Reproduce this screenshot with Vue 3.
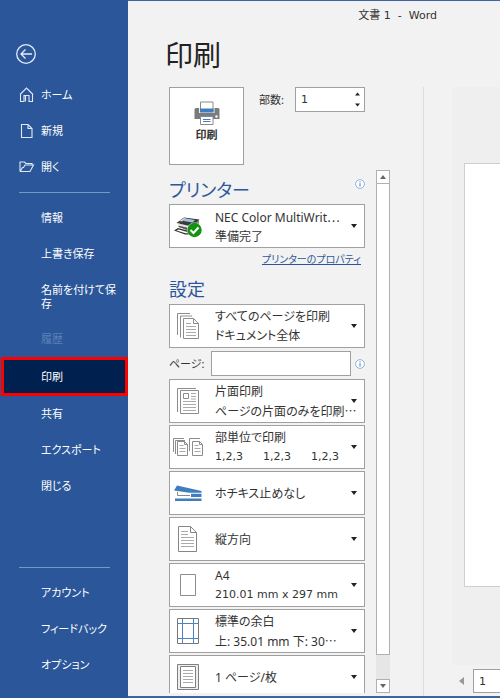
<script setup>
import { ref } from 'vue'

const primary = [
  { label: 'ホーム', icon: 'home' },
  { label: '新規', icon: 'new' },
  { label: '開く', icon: 'open' }
]
const fileItems = [
  { label: '情報' },
  { label: '上書き保存' },
  { label: '名前を付けて保存', tall: true },
  { label: '履歴', disabled: true },
  { label: '印刷', current: true },
  { label: '共有' },
  { label: 'エクスポート' },
  { label: '閉じる' }
]
const footerItems = ['アカウント', 'フィードバック', 'オプション']

const settings = [
  { icon: 'sides', lines: ['片面印刷', 'ページの片面のみを印刷'], cut: true },
  { icon: 'collate', lines: ['部単位で印刷', '1,2,3\u2003 \u20021,2,3\u2003 \u20021,2,3'], numeric: true },
  { icon: 'staple', lines: ['ホチキス止めなし'] },
  { icon: 'portrait', lines: ['縦方向'] },
  { icon: 'paper', lines: ['A4', '210.01 mm x 297 mm'], numeric: true },
  { icon: 'margins', lines: ['標準の余白', '上: 35.01 mm 下: 30'], cut: true },
  { icon: 'sheet', lines: ['1 ページ/枚'] }
]

const copies = ref('1')
const pages = ref('')
const currentPage = ref('1')
const step = (n) => {
  copies.value = String(Math.max(1, Number(copies.value) + n))
}
</script>

<template>
  <div class="backstage">
    <nav class="sidebar" aria-label="ファイル">
      <button class="back" type="button" aria-label="戻る">
        <svg width="22" height="22" viewBox="0 0 22 22" fill="none" stroke="#e6edf7" stroke-width="1.3">
          <circle cx="11" cy="11" r="9.3" />
          <path d="M17 11H6M10.500 6.500 6 11l4.500 4.500" />
        </svg>
      </button>

      <a v-for="item in primary" :key="item.label" class="item with-icon" href="#">
        <svg class="nav-icon" width="16" height="16" viewBox="0 0 16 16" fill="none" stroke="#e0e9f5" stroke-width="1.100">
          <path v-if="item.icon === 'home'" d="M1 7.500 7.500 1l6.500 6.500M1.500 7v7.500H5V8.500h5v6h3.500V7M6.500 14.500V9" />
          <path v-else-if="item.icon === 'new'" d="M2.500 1.500h6.500l4 4v9H2.500zM9 1.500v4h4" />
          <path v-else d="M1 12.500V3h4.500l1.500 1.500h6V6M1 12.500h10L14.500 6H6L4.500 8.500H3.500L1.200 12.500" />
        </svg>
        {{ item.label }}
      </a>

      <hr class="rule">

      <a
        v-for="item in fileItems"
        :key="item.label"
        class="item"
        :class="{ tall: item.tall, disabled: item.disabled, current: item.current }"
        :aria-disabled="item.disabled"
        :aria-current="item.current ? 'page' : undefined"
        href="#"
      >{{ item.label }}</a>

      <hr class="rule bottom">

      <a v-for="label in footerItems" :key="label" class="item" href="#">{{ label }}</a>
    </nav>

    <main class="main">
      <header class="title">文書 1&nbsp; -&nbsp; Word</header>
      <h1>印刷</h1>

      <div class="columns">
        <section class="options">
          <div class="print-row">
            <button class="print" type="button">
              <svg width="26" height="24" viewBox="0 0 26 24">
                <path d="M2 7h22q1.500 0 1.500 1.500V18H.500V8.500Q.500 7 2 7z" fill="#7b7b7b" />
                <path d="M6.500 1h12.500v9H6.500z" fill="#fff" stroke="#8a8a8a" />
                <path d="M5 7h1v3.500h13.500V7h1v5H5z" fill="#f2f2f2" />
                <path d="M6 7.500h13.500v4H6z" fill="#3f7dbf" />
                <path d="M6.500 15.500h12.500v8H6.500z" fill="#fff" stroke="#8a8a8a" />
                <path d="M9 18.500h7.500M9 20.500h7.500" stroke="#3f7dbf" />
                <circle cx="22.500" cy="15.500" r="1.200" fill="#fff" />
              </svg>
              印刷
            </button>
            <label class="copies-label" for="copies">部数:</label>
            <div class="spinner">
              <input id="copies" v-model="copies" type="text" inputmode="numeric">
              <div class="arrows">
                <button type="button" aria-label="増やす" @click="step(1)">
                  <svg width="5" height="4" viewBox="0 0 5 4"><path d="M0 3.500h5L2.500.500z" fill="#222" /></svg>
                </button>
                <button type="button" aria-label="減らす" @click="step(-1)">
                  <svg width="5" height="4" viewBox="0 0 5 4"><path d="M0 .500h5L2.500 3.500z" fill="#222" /></svg>
                </button>
              </div>
            </div>
          </div>

          <div class="scroll-area">
            <div class="list">
              <div class="head">
                <h2>プリンター</h2>
                <button class="info" type="button" aria-label="プリンターの情報">
                  <svg width="10" height="10" viewBox="0 0 10 10"><circle cx="5" cy="5" r="4.400" fill="#fff" stroke="#86acd9" stroke-width=".9" /><path d="M5 4.200v3.300M5 2.300v1" stroke="#3f7dbf" /></svg>
                </button>
              </div>

              <button class="card" type="button" aria-haspopup="listbox">
                <span class="art">
                  <svg width="30" height="26" viewBox="0 0 30 26">
                    <path d="M9 5.500 26 7.500V16l-6 4L6 14z" fill="#8a8a8a" />
                    <path d="M3.500 10 11 4.500 26.500 6.500 19 13.500z" fill="#3a3a3a" />
                    <path d="M13 5.500 22 7 19.500 9.500 10.500 8z" fill="#9cc4e8" />
                    <path d="M11 5l2.500.5L9 8.500 6.500 8z" fill="#d8d8d8" />
                    <path d="M5 10.500 18.500 13.500v2L5 12.500z" fill="#e4e4e4" />
                    <path d="M5.500 12.800 17 15.800v1.500L5.500 14z" fill="#555" />
                    <path d="M1 17.500 5 15l11 3v3.500h-4z" fill="#333" />
                    <path d="M3.500 17.500l2-1 9 2.500v1.300h-2z" fill="#fff" />
                    <circle cx="21.500" cy="17" r="7.500" fill="#fff" />
                    <circle cx="21.500" cy="17" r="7.200" fill="#129412" />
                    <path d="m17.500 17 3 3 5-5.500" fill="none" stroke="#fff" stroke-width="2" />
                  </svg>
                </span>
                <span class="text">
                  <span>NEC Color MultiWrit<span class="dots">…</span></span>
                  <span>準備完了</span>
                </span>
                <svg class="caret" width="6" height="4" viewBox="0 0 6 4"><path d="M0 0h6L3 4z" fill="#222" /></svg>
              </button>

              <a class="properties" href="#">プリンターのプロパティ</a>

              <h2 class="settings-title">設定</h2>

              <button class="card" type="button" aria-haspopup="listbox">
                <span class="art">
                  <svg width="24" height="28" viewBox="0 0 24 28" fill="none" stroke="#8c8c8c">
                    <path d="M1.500 23V1.500H14M4.500 25.500V4H16" />
                    <path d="M7.500 6.500h10l5 5v15h-15z" fill="#fff" />
                    <path d="M17.500 6.500v5h5" />
                    <path d="M10 11.500h5M10 14.500h10M10 17.500h10M10 20.500h10M10 23.500h10" stroke="#aaa" />
                  </svg>
                </span>
                <span class="text">
                  <span>すべてのページを印刷</span>
                  <span>ドキュメント全体</span>
                </span>
                <svg class="caret" width="6" height="4" viewBox="0 0 6 4"><path d="M0 0h6L3 4z" fill="#222" /></svg>
              </button>

              <div class="pages">
                <label for="pages">ページ:</label>
                <input id="pages" v-model="pages" type="text">
                <button class="info" type="button" aria-label="ページ指定の情報">
                  <svg width="10" height="10" viewBox="0 0 10 10"><circle cx="5" cy="5" r="4.400" fill="#fff" stroke="#86acd9" stroke-width=".9" /><path d="M5 4.200v3.300M5 2.300v1" stroke="#3f7dbf" /></svg>
                </button>
              </div>

              <div class="cards">
                <button v-for="s in settings" :key="s.icon" class="card" type="button" aria-haspopup="listbox">
                  <span class="art">
                    <svg v-if="s.icon === 'sides'" width="24" height="28" viewBox="0 0 24 28" fill="none" stroke="#8c8c8c">
                      <path d="M1.500 25V1.500H20" />
                      <path d="M4.500 3.500h18v23h-18z" fill="#fff" />
                      <path d="M7.500 6.500h5v5h-5z" />
                      <path d="M15 6.500h5M15 9.500h5M15 12h5M7 14.500h13M7 17.500h13M7 20.500h13M7 23.500h13" stroke="#aaa" />
                    </svg>
                    <svg v-else-if="s.icon === 'collate'" width="32" height="20" viewBox="0 0 32 20" fill="none" stroke="#8c8c8c">
                      <path d="M1.500 15V1.500H12M3.500 17V3.500H13M17.500 14V1.500H28" />
                      <path d="M5.500 4.500h7l3 3v11h-10zM20.500 4.500h7l3 3v11h-10z" fill="#fff" />
                      <path d="M12.500 4.500v3h3M27.500 4.500v3h3" />
                      <path d="M7.500 8.500h4M7.500 11.500h6M7.500 14.500h6M22.500 8.500h4M22.500 11.500h6M22.500 14.500h6" stroke="#aaa" />
                    </svg>
                    <svg v-else-if="s.icon === 'staple'" width="28" height="18" viewBox="0 0 28 18">
                      <path d="M3 1.500 27.500 7v2H17L0 6.500z" fill="#3f7dbf" />
                      <path d="M3.500 8v3.500H16" fill="none" stroke="#888" />
                      <path d="M17 9.500h10.500V13H17z" fill="#3f7dbf" />
                      <path d="M1 14.500h26.500V17H1z" fill="#3f7dbf" />
                      <path d="M16 9.200h11.500" stroke="#fff" stroke-width=".8" />
                    </svg>
                    <svg v-else-if="s.icon === 'portrait'" width="22" height="28" viewBox="0 0 22 28" fill="none" stroke="#858585">
                      <path d="M1.500 1.500h12l6 6v19h-18z" />
                      <path d="M13.500 1.500v6h6" />
                      <path d="M4 6.500h7M4 9.500h7M4 12.500h13M4 15.500h13M4 18.500h13M4 21.500h13" stroke="#aaa" />
                    </svg>
                    <svg v-else-if="s.icon === 'paper'" width="16" height="22" viewBox="0 0 16 22">
                      <path d="M.500.500h15v21H.500z" fill="#fff" stroke="#8c8c8c" />
                    </svg>
                    <svg v-else-if="s.icon === 'margins'" width="22" height="26" viewBox="0 0 22 26" fill="none">
                      <path d="M.500.500h21v25H.500z" stroke="#777" />
                      <path d="M5.500 1v24M16.500 1v24M1 5.500h20M1 20.500h20" stroke="#4a84c4" />
                    </svg>
                    <svg v-else width="22" height="26" viewBox="0 0 22 26" fill="none" stroke="#808080">
                      <path d="M.500.500h21v25H.500z" fill="#eee" />
                      <path d="M3.500 2.500h15v21h-15z" fill="#fff" />
                      <path d="M6 6.500h10M6 9.500h10M6 12.500h10M6 15.500h10M6 18.500h10" stroke="#aaa" />
                    </svg>
                  </span>
                  <span class="text">
                    <span v-for="(line, i) in s.lines" :key="line" :class="{ numeric: s.numeric && i === 1 }">{{ line }}<span v-if="s.cut && i === 1" class="dots">…</span></span>
                  </span>
                  <svg class="caret" width="6" height="4" viewBox="0 0 6 4"><path d="M0 0h6L3 4z" fill="#222" /></svg>
                </button>
              </div>
            </div>

            <div class="scrollbar">
              <button type="button" aria-label="上へ">
                <svg width="6" height="4" viewBox="0 0 6 4"><path d="M0 4h6L3 0z" fill="#666" /></svg>
              </button>
              <div class="thumb"></div>
              <button type="button" aria-label="下へ">
                <svg width="6" height="4" viewBox="0 0 6 4"><path d="M0 0h6L3 4z" fill="#666" /></svg>
              </button>
            </div>
          </div>
        </section>

        <section class="preview" aria-label="印刷プレビュー">
          <div class="canvas"><div class="sheet"></div></div>
          <div class="pager">
            <button type="button" aria-label="前のページ">
              <svg width="5" height="8" viewBox="0 0 5 8"><path d="M5 0v8L0 4z" fill="#999" /></svg>
            </button>
            <input v-model="currentPage" type="text" aria-label="現在のページ">
          </div>
        </section>
      </div>
    </main>
  </div>
</template>

<style>
body {
  margin: 0;
}
</style>

<style scoped>
.backstage {
  display: flex;
  height: 100vh;
  box-sizing: border-box;
  background: #f2f2f2;
  color: #333;
  font: 12px/19px "Noto Sans", "Noto Sans CJK JP", sans-serif;
  font-feature-settings: "palt";
}
.backstage * {
  box-sizing: border-box;
}
button,
input {
  margin: 0;
  padding: 0;
  border: 0;
  background: none;
  color: inherit;
  font: inherit;
  font-feature-settings: inherit;
}
svg {
  display: block;
  flex: none;
}

.sidebar {
  display: flex;
  flex: none;
  flex-direction: column;
  width: 128px;
  padding: 43px 0 15px;
  background: #2b579a;
  font-size: 11px;
  line-height: 14px;
}
.back {
  width: 22px;
  height: 22px;
  margin: 0 0 12px 15px;
}
.item {
  display: flex;
  flex: none;
  align-items: center;
  height: 36px;
  padding: 0 10px 0 41px;
  color: #fff;
  text-decoration: none;
  word-break: break-all;
}
.with-icon {
  gap: 6px;
  padding-left: 19px;
}
.tall {
  height: 49px;
}
.disabled {
  color: #5b80b8;
}
.current {
  height: 39px;
  margin-left: 1px;
  padding-left: 37px;
  border: 3px solid #f00;
  background: #00204f;
}
.rule {
  flex: none;
  width: 91px;
  height: 1px;
  margin: 7px 0 7px 19px;
  border: 0;
  background: #6f9bcb;
}
.bottom {
  margin-top: auto;
}

.main {
  display: flex;
  flex: 1;
  flex-direction: column;
  min-width: 0;
  border-top: 1px solid #3f63a5;
  border-bottom: 2px solid #3f63a5;
}
.title,
.numeric,
.spinner input,
.pager input {
  font-family: "DejaVu Sans", "Noto Sans CJK JP", sans-serif;
  font-size: 11px;
}
.title {
  padding: 5px 63px 0 0;
  text-align: right;
}
h1,
h2 {
  margin: 0;
  font-weight: 400;
}
h1 {
  margin: 10px 0 12px 37px;
  color: #222;
  font-size: 28px;
  line-height: 40px;
}
.columns {
  display: flex;
  flex: 1;
  min-height: 0;
}
.options {
  display: flex;
  flex: none;
  flex-direction: column;
  width: 296px;
  padding: 0 33px 3px 41px;
  border-right: 1px solid #dedede;
}
.print-row {
  display: flex;
  align-items: flex-start;
}
.print {
  display: flex;
  flex-direction: column;
  align-items: center;
  justify-content: center;
  gap: 0;
  width: 75px;
  height: 78px;
  padding-bottom: 8px;
  border: 1px solid #a0a0a0;
  background: #fff;
  font-size: 11px;
  font-weight: 700;
}
.copies-label {
  width: 36px;
  margin-left: 15px;
  font-size: 11px;
  line-height: 25px;
}
.spinner {
  display: flex;
  width: 70px;
  height: 25px;
  border: 1px solid #a0a0a0;
  background: #fff;
}
.spinner input {
  flex: 1;
  min-width: 0;
  padding-left: 5px;
}
.arrows {
  display: flex;
  flex-direction: column;
  width: 14px;
}
.arrows button {
  display: flex;
  flex: 1;
  align-items: center;
  justify-content: center;
}
.scroll-area {
  display: flex;
  flex: 1;
  gap: 11px;
  min-height: 0;
  padding-top: 5px;
}
.list {
  flex: 1;
  min-width: 0;
  overflow: hidden;
}
.head {
  display: flex;
  justify-content: space-between;
  height: 34px;
  padding-top: 6px;
}
h2 {
  color: #2b579a;
  font-size: 18px;
  line-height: 28px;
}
.info {
  width: 10px;
  height: 10px;
  margin-top: 3px;
}
.card {
  display: flex;
  align-items: center;
  width: 100%;
  height: 44px;
  padding-right: 7px;
  border: 1px solid #a0a0a0;
  background: #fff;
  text-align: left;
}
.art {
  display: flex;
  flex: none;
  justify-content: center;
  width: 35px;
  margin-right: 10px;
}
.text {
  display: flex;
  flex: 1;
  flex-direction: column;
  min-width: 0;
  white-space: nowrap;
}
.dots {
  font-family: "Noto Sans CJK JP", sans-serif;
}
.properties {
  display: block;
  padding: 2px 4px 0 0;
  color: #2b579a;
  font-size: 10px;
  text-align: right;
}
.settings-title {
  margin-top: 6px;
  padding-bottom: 1px;
}
.pages {
  display: flex;
  align-items: center;
  justify-content: space-between;
  margin: 3px 0;
  font-size: 11px;
}
.pages label {
  flex: none;
  width: 42px;
}
.pages input {
  flex: 1;
  min-width: 0;
  height: 25px;
  margin-right: 4px;
  border: 1px solid #a0a0a0;
  background: #fff;
}
.pages .info {
  margin-top: 0;
}
.cards {
  display: flex;
  flex-direction: column;
  gap: 2px;
}
.cards .card {
  flex: none;
}
.scrollbar {
  display: flex;
  flex: none;
  flex-direction: column;
  width: 14px;
  background: #e6e6e6;
}
.scrollbar button {
  display: flex;
  flex: none;
  align-items: center;
  justify-content: center;
  height: 14px;
  border: 1px solid #b0b0b0;
  background: #fff;
}
.thumb {
  flex: 1;
  margin-bottom: 24px;
  border: 1px solid #b0b0b0;
  border-top: 0;
  background: #fff;
}

.preview {
  display: flex;
  flex: 1;
  flex-direction: column;
  min-width: 0;
  padding-left: 28px;
}
.canvas {
  display: flex;
  flex: 1;
  padding: 76px 0 78px 12px;
  background: #efefef;
}
.sheet {
  flex: 1;
  border: 1px solid #cfcfcf;
  border-right: 0;
  background: #fff;
}
.pager {
  display: flex;
  align-items: center;
  gap: 9px;
  padding: 4px 0 3px 7px;
}
.pager input {
  flex: 1;
  min-width: 0;
  height: 24px;
  padding-left: 5px;
  border: 1px solid #a0a0a0;
  border-right: 0;
  background: #fff;
}
</style>
